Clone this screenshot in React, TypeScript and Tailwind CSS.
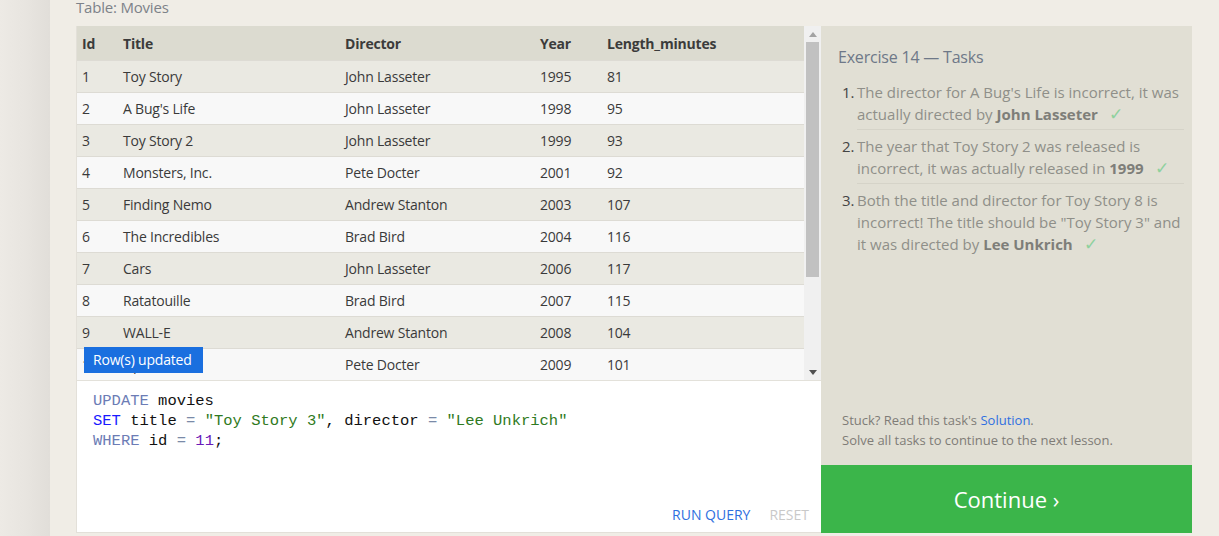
import React from "react";

const rows = [
  [1, "Toy Story", "John Lasseter", 1995, 81],
  [2, "A Bug's Life", "John Lasseter", 1998, 95],
  [3, "Toy Story 2", "John Lasseter", 1999, 93],
  [4, "Monsters, Inc.", "Pete Docter", 2001, 92],
  [5, "Finding Nemo", "Andrew Stanton", 2003, 107],
  [6, "The Incredibles", "Brad Bird", 2004, 116],
  [7, "Cars", "John Lasseter", 2006, 117],
  [8, "Ratatouille", "Brad Bird", 2007, 115],
  [9, "WALL-E", "Andrew Stanton", 2008, 104],
  [10, "Up", "Pete Docter", 2009, 101],
];

const font = { fontFamily: '"Open Sans", "Noto Sans", sans-serif' };

function Check() {
  return <span className="ml-[11px] text-[17px] leading-[20px] text-[#8fd19e]">✓</span>;
}

export default function App() {
  return (
    <div
      className="flex h-[536px] w-[1219px] overflow-hidden bg-[#f0ede6] text-[14px] tracking-[-0.2px]"
      style={font}
    >
      <div className="h-full w-[50px] shrink-0 bg-gradient-to-r from-[#edeae5] via-[#e8e5e0] to-[#e1ded9]" />
      <div className="flex flex-1 flex-col pl-[26px] pr-[27px]">
        <div className="-mt-[3px] mb-[9px] h-[20px] text-[15px] leading-[20px] text-[#7d8289]">
          Table: Movies
        </div>
        <div className="flex h-[507px]">
          {/* left panel */}
          <div className="flex w-[745px] shrink-0 flex-col border-b border-l border-[#e3e0d9] bg-white">
            <div className="flex h-[355px] border-b border-[#e3e1da]">
              <div className="flex-1 overflow-hidden">
                <div className="flex h-[34px] items-center bg-[#dcdbd0] font-bold text-[#3b3b3b]">
                  <div className="w-[41px] pl-[5px]">Id</div>
                  <div className="w-[221px] pl-[5px]">Title</div>
                  <div className="w-[195px] pl-[6px]">Director</div>
                  <div className="w-[67px] pl-[6px]">Year</div>
                  <div className="flex-1 pl-[6px]">Length_minutes</div>
                </div>
                {rows.map((r, i) => (
                  <div
                    key={i}
                    className={`flex h-[32px] items-center border-t border-[#dddbd4] text-[#3a3a3a] ${
                      i % 2 === 0 ? "bg-[#eae9e2]" : "bg-[#f8f8f8]"
                    }`}
                  >
                    <div className="w-[41px] pl-[5px]">{r[0]}</div>
                    <div className="w-[221px] pl-[5px]">{r[1]}</div>
                    <div className="w-[195px] pl-[6px]">{r[2]}</div>
                    <div className="w-[67px] pl-[6px]">{r[3]}</div>
                    <div className="flex-1 pl-[6px]">{r[4]}</div>
                  </div>
                ))}
              </div>
              {/* scrollbar */}
              <div className="flex w-[17px] shrink-0 flex-col items-center bg-[#f0f0f0]">
                <div className="flex h-[16px] w-full items-center justify-center">
                  <svg width="8" height="5" viewBox="0 0 8 5">
                    <path d="M4 0L8 5H0Z" fill="#a3a3a3" />
                  </svg>
                </div>
                <div className="h-[235px] w-[13px] bg-[#c1c1c1]" />
                <div className="flex-1" />
                <div className="flex h-[16px] w-full items-center justify-center">
                  <svg width="8" height="5" viewBox="0 0 8 5">
                    <path d="M0 0H8L4 5Z" fill="#505050" />
                  </svg>
                </div>
              </div>
              {/* toast */}
              <div className="absolute left-[84px] top-[347px] flex h-[26px] w-[119px] items-center bg-[#1a6fdf] pl-[9px] text-[14px] leading-[20px] text-white">
                <span className="-mt-[1px]">Row(s) updated</span>
              </div>
            </div>
            {/* editor */}
            <div className="flex flex-1 flex-col">
              <div
                className="flex-1 pl-[16px] pt-[10px] text-[15.5px] leading-[20px] tracking-normal text-[#111]"
                style={{ fontFamily: '"Liberation Mono", monospace' }}
              >
                <div>
                  <span className="text-[#6c7cb5]">UPDATE</span> movies
                </div>
                <div>
                  <span className="text-[#1a1aff]">SET</span> title{" "}
                  <span className="text-[#7a8aa8]">=</span>{" "}
                  <span className="text-[#2f7a22]">"Toy Story 3"</span>, director{" "}
                  <span className="text-[#7a8aa8]">=</span>{" "}
                  <span className="text-[#2f7a22]">"Lee Unkrich"</span>
                </div>
                <div>
                  <span className="text-[#6c7cb5]">WHERE</span> id{" "}
                  <span className="text-[#7a8aa8]">=</span>{" "}
                  <span className="text-[#6a1ab8]">11</span>;
                </div>
              </div>
              <div className="flex h-[36px] items-end justify-end gap-[19px] pb-[7px] pr-[12px] text-[14px] leading-[20px] tracking-normal">
                <span className="text-[#2f6fe0]">RUN QUERY</span>
                <span className="text-[#c9c9c9]">RESET</span>
              </div>
            </div>
          </div>
          {/* right panel */}
          <div className="flex w-[371px] shrink-0 flex-col bg-[#e1dfd4]">
            <div className="flex-1 pl-[17px] pr-[8px] pt-[20px]">
              <div className="text-[16px] leading-[22px] text-[#6e7888]">Exercise 14 — Tasks</div>
              <ol className="mt-[8px] text-[15px] leading-[22px] tracking-normal text-[#8f8f89]">
                <li className="flex">
                  <span className="w-[19px] shrink-0 pl-[4px] pt-[5px] text-[#444]">1.</span>
                  <div className="w-[327px] border-b border-[#d5d3c8] pb-[4px] pt-[5px]">
                    <div className="w-[326px]">
                      The director for A Bug's Life is incorrect, it was actually directed by{" "}
                      <b className="text-[#7e7e79]">John Lasseter</b>
                      <Check />
                    </div>
                  </div>
                </li>
                <li className="flex">
                  <span className="w-[19px] shrink-0 pl-[4px] pt-[5px] text-[#444]">2.</span>
                  <div className="w-[327px] border-b border-[#d5d3c8] pb-[4px] pt-[5px]">
                    <div className="w-[326px]">
                      The year that Toy Story 2 was released is incorrect, it was actually released in{" "}
                      <b className="text-[#7e7e79]">1999</b>
                      <Check />
                    </div>
                  </div>
                </li>
                <li className="flex">
                  <span className="w-[19px] shrink-0 pl-[4px] pt-[5px] text-[#444]">3.</span>
                  <div className="w-[327px] pb-[4px] pt-[5px]">
                    <div className="w-[326px]">
                      Both the title and director for Toy Story 8 is incorrect! The title should be "Toy
                      Story 3" and it was directed by <b className="text-[#7e7e79]">Lee Unkrich</b>
                      <Check />
                    </div>
                  </div>
                </li>
              </ol>
            </div>
            <div className="pb-[15px] pl-[21px] text-[13px] leading-[20px] tracking-normal text-[#7f7c77]">
              <div>
                Stuck? Read this task's <span className="text-[#2f6fe0]">Solution</span>.
              </div>
              <div>Solve all tasks to continue to the next lesson.</div>
            </div>
            <div className="flex h-[68px] items-center justify-center bg-[#3bb54a] text-[22px] tracking-normal text-white">
              Continue ›
            </div>
          </div>
        </div>
      </div>
    </div>
  );
}
